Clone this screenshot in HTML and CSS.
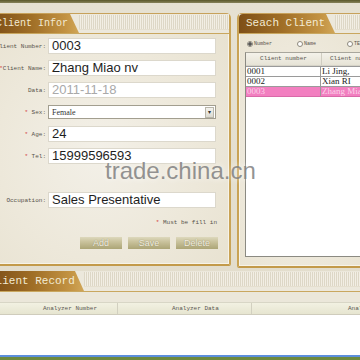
FILE: index.html
```html
<!DOCTYPE html>
<html>
<head>
<meta charset="utf-8">
<link rel="stylesheet" href="styles.css">
</head>
<body>
<div class="screen">
  <div class="topbar"></div>
  <div class="panels">
    <section class="panel left">
      <div class="phead">
        <div class="tab tab-left"><span>Client Infor</span></div>
        <div class="stripes"></div>
      </div>
      <div class="form">
        <label class="lbl">Client Number:</label><div class="inp">0003</div>
        <label class="lbl"><i>*</i>Client Name:</label><div class="inp">Zhang Miao nv</div>
        <label class="lbl">Data:</label><div class="inp grey">2011-11-18</div>
        <label class="lbl"><i>*</i> Sex:</label><div class="sel"><span>Female</span><b>&#9662;</b></div>
        <label class="lbl"><i>*</i> Age:</label><div class="inp">24</div>
        <label class="lbl"><i>*</i> Tel:</label><div class="inp">15999596593</div>
        <div></div><div></div>
        <label class="lbl">Occupation:</label><div class="inp">Sales Presentative</div>
      </div>
      <div class="note"><i>*</i> Must be fill in</div>
      <div class="btns">
        <span class="btn">Add</span>
        <span class="btn">Save</span>
        <span class="btn">Delete</span>
      </div>
    </section>
    <section class="panel right">
      <div class="phead">
        <div class="tab tab-right"><span>Seach Client</span></div>
        <div class="stripes"></div>
      </div>
      <div class="radios">
        <span class="radio on"><em></em>Number</span>
        <span class="radio"><em></em>Name</span>
        <span class="radio"><em></em>TEL</span>
      </div>
      <div class="grid">
        <div class="ghead"><span class="c1">Client number</span><span class="c2">Client name</span></div>
        <div class="grow"><span class="c1">0001</span><span class="c2">Li Jing,</span></div>
        <div class="grow"><span class="c1">0002</span><span class="c2">Xian RI</span></div>
        <div class="grow sel-row"><span class="c1">0003</span><span class="c2">Zhang Miao</span></div>
      </div>
    </section>
  </div>
  <section class="record">
    <div class="phead rhead">
      <div class="tab tab-rec"><span>Client Record</span></div>
      <div class="stripes"></div>
    </div>
    <div class="rband"></div>
    <div class="rtable-head">
      <span class="h1">Analyzer Number</span>
      <span class="h2">Analyzer Data</span>
      <span class="h3">Analyzer</span>
    </div>
    <div class="rbody"></div>
  </section>
  <div class="taskbar"></div>
  <div class="watermark">trade.china.cn</div>
</div>
</body>
</html>
```

FILE: styles.css
```css
html, body {
  margin: 0;
  padding: 0;
}
body {
  width: 360px;
  height: 360px;
  overflow: hidden;
  background: #e4dfcf;
}
.screen {
  position: relative;
  width: 360px;
  height: 360px;
  overflow: hidden;
  background: linear-gradient(to bottom, #e6e1d2, #e2dccb);
}
.topbar {
  height: 3px;
  background: linear-gradient(to bottom, #5a572a, #87835a);
}
.panels {
  display: flex;
  gap: 6px;
  height: 265px;
  padding-top: 10px;
  margin-left: -8px;
  box-sizing: border-box;
}
.panel {
  flex-shrink: 0;
  box-sizing: border-box;
  border: 1px solid #c7a15a;
  border-radius: 5px 5px 2px 2px;
  background: radial-gradient(ellipse at 45% 55%, #f3f0e8 0%, #ede8da 55%, #e7e1cf 100%);
  box-shadow: inset 0 0 0 1px #f7f3e8;
}
.panel.left {
  width: 239px;
  height: 253px;
  border-right: 2px solid #c9a355;
  border-bottom: 2px solid #c39a4a;
}
.panel.right {
  width: 140px;
  height: 255px;
  border-left: 2px solid #c9a355;
  border-bottom: 2px solid #c39a4a;
}
.phead {
  display: flex;
  height: 19px;
  border-bottom: 1px solid #c9a75f;
  background: #ece8dc;
}
.tab {
  flex-shrink: 0;
  height: 19px;
  background: linear-gradient(to right, #7e4f17 0%, #a06f27 45%, #c39343 85%, #d0a658 100%);
  clip-path: polygon(0 0, calc(100% - 9px) 0, 100% 100%, 0 100%);
  font-family: "Liberation Mono", "DejaVu Sans Mono", monospace;
  font-size: 11px;
  line-height: 19px;
  color: #f3ebd3;
  white-space: nowrap;
  overflow: hidden;
}
.tab-left {
  width: 86px;
  font-size: 10px;
}
.tab-left span {
  margin-left: 3px;
}
.tab-right {
  width: 96px;
  border-top-left-radius: 4px;
}
.tab-right span {
  margin-left: 7px;
}
.stripes {
  flex: 1;
  height: 14px;
  margin-top: 1px;
  background: repeating-linear-gradient(90deg, #ddd7c6 0 1px, #f2eee4 1px 2px);
  border-bottom: 1px solid #e5dfcf;
}
.form {
  display: grid;
  grid-template-columns: 53px 168px;
  grid-auto-rows: 16px;
  column-gap: 2px;
  row-gap: 6px;
  padding-top: 4px;
}
.lbl {
  align-self: center;
  text-align: right;
  white-space: nowrap;
  font-family: "Liberation Mono", monospace;
  font-size: 6px;
  color: #57524a;
}
.lbl i, .note i {
  font-style: normal;
  color: #d23a3a;
}
.inp {
  box-sizing: border-box;
  background: #ffffff;
  border: 1px solid #dcd8cc;
  padding-left: 3px;
  font-family: "Liberation Sans", Arial, sans-serif;
  font-size: 13px;
  line-height: 14px;
  color: #1e1e1e;
  white-space: nowrap;
  overflow: hidden;
}
.inp.grey {
  color: #a9a9a9;
}
.sel {
  box-sizing: border-box;
  height: 14px;
  margin-top: 1px;
  display: flex;
  align-items: center;
  justify-content: space-between;
  background: #ffffff;
  border: 1px solid #a29e8f;
  padding-left: 3px;
  font-family: "Liberation Serif", serif;
  font-size: 8px;
  color: #333;
}
.sel b {
  width: 7px;
  height: 9px;
  margin-right: 1px;
  border: 1px solid #b9b6aa;
  background: linear-gradient(#f4f3ee, #dcdad0);
  font-size: 6px;
  line-height: 9px;
  text-align: center;
  color: #333;
  font-weight: normal;
}
.note {
  margin-top: 11px;
  padding-right: 12px;
  text-align: right;
  font-family: "Liberation Mono", monospace;
  font-size: 6px;
  line-height: 8px;
  color: #57524a;
}
.btns {
  display: flex;
  justify-content: flex-end;
  gap: 6px;
  margin-top: 10px;
  padding-right: 11px;
}
.btn {
  width: 42px;
  height: 12px;
  background: linear-gradient(to bottom, #ddd8bc 0%, #c9c29c 40%, #aca576 100%);
  font-family: "Liberation Sans", Arial, sans-serif;
  font-size: 9px;
  line-height: 12px;
  text-align: center;
  color: #f4f0e2;
  text-shadow: 0 0 1px #7e7852;
}
.radios {
  display: flex;
  height: 10px;
  margin-top: 5px;
  padding-left: 8px;
  font-family: "Liberation Mono", monospace;
  font-size: 5px;
  line-height: 10px;
  color: #555048;
}
.radio {
  display: flex;
  align-items: center;
  gap: 1px;
  width: 50px;
  flex-shrink: 0;
}
.radio em {
  width: 4px;
  height: 4px;
  border: 1px solid #8c887c;
  border-radius: 50%;
  background: #fff;
}
.radio.on em {
  background: radial-gradient(circle, #555 0 1.5px, #fff 2px);
}
.grid {
  margin: 3px 0 0 6px;
  height: 203px;
  border-left: 1px solid #8b8a82;
  border-top: 1px solid #a8a69c;
  border-bottom: 1px solid #8b8a82;
  background: #ffffff;
}
.ghead {
  display: flex;
  height: 12px;
  background: linear-gradient(#f4f2ea, #e6e3d6);
  border-bottom: 1px solid #d6d3c8;
  font-family: "Liberation Mono", monospace;
  font-size: 6px;
  line-height: 12px;
  color: #5a5650;
  white-space: nowrap;
}
.ghead .c1 {
  width: 75px;
  flex-shrink: 0;
  text-align: center;
  border-right: 1px solid #d0cdc1;
}
.ghead .c2 {
  padding-left: 8px;
}
.grow {
  display: flex;
  height: 9px;
  border-top: 1px solid #9a9a9a;
  font-family: "Liberation Serif", serif;
  font-size: 9px;
  line-height: 9px;
  color: #222;
  white-space: nowrap;
}
.grow .c1 {
  width: 75px;
  flex-shrink: 0;
  padding-left: 1px;
  box-sizing: border-box;
  border-right: 1px solid #9a9a9a;
}
.grow .c2 {
  padding-left: 1px;
}
.grow.sel-row {
  background: #f27fc0;
  color: #fbd3ea;
  border-bottom: 1px solid #d96aa8;
}
.record {
  margin-top: 3px;
  margin-left: -8px;
  width: 376px;
  height: 84px;
  background: linear-gradient(to bottom, #e9e4d6, #ebe6d8);
}
.rhead {
  height: 20px;
  border-bottom: 1px solid #c9a75f;
}
.tab-rec {
  width: 92px;
  height: 20px;
  line-height: 20px;
}
.tab-rec span {
  margin-left: -3px;
}
.rband {
  height: 10px;
  background: #ebe7da;
}
.rtable-head {
  display: flex;
  height: 11px;
  background: linear-gradient(#f2f1e2, #e6e5d0);
  border-top: 1px solid #d8d6c6;
  border-bottom: 1px solid #cfccbc;
  font-family: "Liberation Mono", monospace;
  font-size: 6px;
  line-height: 11px;
  color: #5a5650;
  white-space: nowrap;
  overflow: hidden;
}
.rtable-head span {
  box-sizing: border-box;
  flex-shrink: 0;
}
.h1 {
  width: 126px;
  padding-left: 51px;
  border-right: 1px solid #d2d0c0;
}
.h2 {
  width: 134px;
  padding-left: 54px;
  border-right: 1px solid #d2d0c0;
}
.h3 {
  padding-left: 96px;
}
.rbody {
  height: 41px;
  background: #ffffff;
}
.taskbar {
  height: 5px;
  background: linear-gradient(to bottom, #5c8fdc 0 2px, #6e8a3e 2px 5px);
}
.watermark {
  position: absolute;
  left: 105px;
  top: 157px;
  font-family: "Liberation Sans", Arial, sans-serif;
  font-size: 24px;
  line-height: 28px;
  color: rgba(128, 128, 128, 0.85);
  text-shadow: 0 0 6px rgba(255, 255, 255, 0.9);
  white-space: nowrap;
}
```
